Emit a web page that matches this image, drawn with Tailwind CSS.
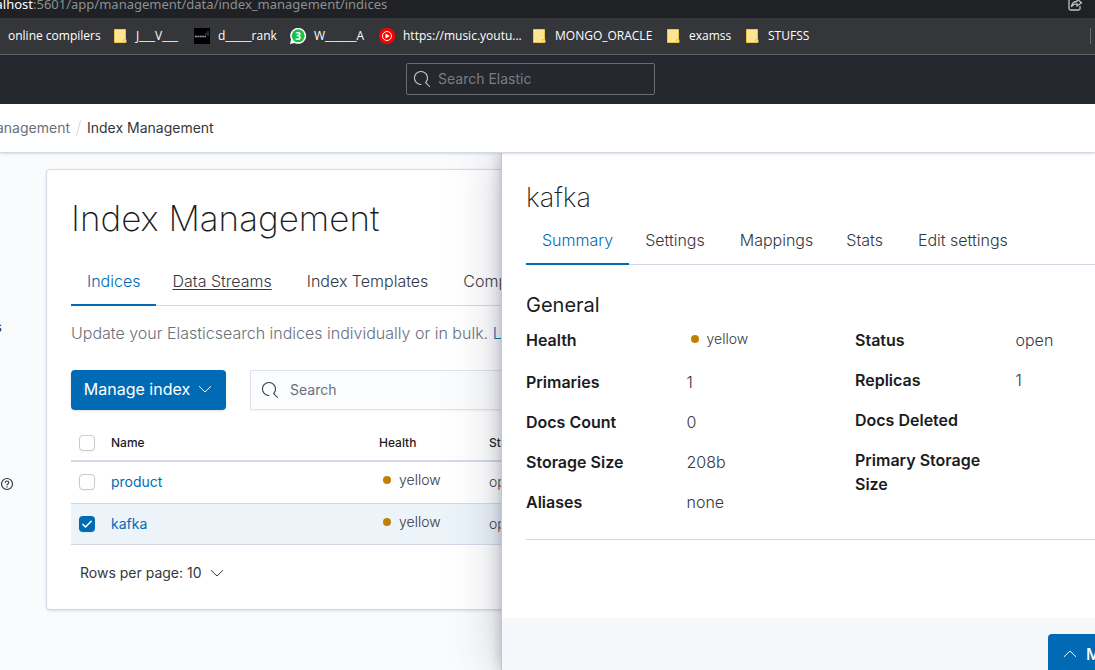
<!DOCTYPE html>
<html lang="en">
<head>
<meta charset="utf-8">
<title>Index Management</title>
<script src="https://cdn.jsdelivr.net/npm/@tailwindcss/browser@4"></script>
</head>
<body class="h-screen overflow-hidden flex flex-col bg-[#fafbfd] font-['Inter',sans-serif] text-[#343741]">

<!-- Browser address bar -->
<div class="h-[18px] shrink-0 bg-[#202124] flex items-end justify-between overflow-hidden font-['Noto_Sans',sans-serif] text-[13px] leading-5 text-[#8b9095] pr-3">
  <div class="flex">
    <span class="w-[33px] flex justify-end text-white whitespace-nowrap"><span>localhost</span></span><span class="pb-1">:5601/app/management/data/index_management/indices</span>
  </div>
  <button aria-label="Share" class="pb-1.5">
    <svg class="size-4" viewBox="0 0 16 16" fill="none" stroke="#bdc1c6" stroke-width="1.3"><path d="M5 3H3.500Q2 3 2 4.500V12.500Q2 14 3.500 14H11.500Q13 14 13 12.500V10"/><path d="M4.500 10.500C5 7 7 5.500 10 5.500V3L14.500 6.800L10 10V7.800C7.500 7.800 6 8.500 4.500 10.500Z" stroke-linejoin="round"/></svg>
  </button>
</div>

<!-- Bookmarks -->
<nav class="h-[37px] shrink-0 bg-[#35363a] border-b border-[#5f6063] flex items-center pl-2 pr-1 font-['Open_Sans',sans-serif] text-xs text-white whitespace-nowrap">
  <a href="#" class="w-[104px]">online compilers</a>
  <a href="#" class="w-[82px] flex items-center gap-2"><svg class="size-4 shrink-0" viewBox="0 0 16 16"><path d="M2.500 1.500H13.500V11V14.500H2.500Z" fill="#ffe591" stroke="#e9c64c"/><path d="M11.500 14.500V11.500H14V14.500Z" fill="#ffe591" stroke="#e9c64c"/></svg>J___V___</a>
  <a href="#" class="w-24 flex items-center gap-2"><svg class="size-4 shrink-0" viewBox="0 0 16 16"><path fill="#000" d="M0 0H16V16H0Z"/><path d="M1 8.500H12" stroke="#999" stroke-width="1.500" stroke-dasharray="2 .4"/><path d="M12 5V7M14 3V8" stroke="#12343d" stroke-width="2"/></svg>d_____rank</a>
  <a href="#" class="w-[89px] flex items-center gap-2"><svg class="size-4 shrink-0" viewBox="0 0 16 16"><path d="M0 16L1 11.500A8 8 0 1 1 4.500 15Z" fill="#fff"/><circle cx="8.200" cy="7.800" r="6.500" fill="#19c04b"/><text x="8.200" y="11.500" text-anchor="middle" font-size="10" font-weight="700" fill="#fff" font-family="Open Sans">3</text></svg>W______A</a>
  <a href="#" class="w-[152px] flex items-center gap-2"><svg class="size-4 shrink-0" viewBox="0 0 16 16"><circle cx="8" cy="8" r="8" fill="#f00"/><circle cx="8" cy="8" r="4.500" fill="none" stroke="#fff"/><path d="M6.500 5.500L10.800 8L6.500 10.500Z" fill="#fff"/></svg>https://music.youtu...</a>
  <a href="#" class="w-[134px] flex items-center gap-2"><svg class="size-4 shrink-0" viewBox="0 0 16 16"><path d="M2.500 1.500H13.500V11V14.500H2.500Z" fill="#ffe591" stroke="#e9c64c"/><path d="M11.500 14.500V11.500H14V14.500Z" fill="#ffe591" stroke="#e9c64c"/></svg>MONGO_ORACLE</a>
  <a href="#" class="w-[79px] flex items-center gap-2"><svg class="size-4 shrink-0" viewBox="0 0 16 16"><path d="M2.500 1.500H13.500V11V14.500H2.500Z" fill="#ffe591" stroke="#e9c64c"/><path d="M11.500 14.500V11.500H14V14.500Z" fill="#ffe591" stroke="#e9c64c"/></svg>examss</a>
  <a href="#" class="flex items-center gap-2"><svg class="size-4 shrink-0" viewBox="0 0 16 16"><path d="M2.500 1.500H13.500V11V14.500H2.500Z" fill="#ffe591" stroke="#e9c64c"/><path d="M11.500 14.500V11.500H14V14.500Z" fill="#ffe591" stroke="#e9c64c"/></svg>STUFSS</a>
  <span class="ml-auto h-4 border-l border-[#6b6c6f]"></span>
</nav>

<!-- Elastic header -->
<header class="h-[49px] shrink-0 bg-[#25282f] flex items-start pt-2">
  <label class="ml-[406px] w-[249px] h-8 border border-[#6b6c70] rounded-xs flex items-center gap-2 px-[7px]">
    <svg class="size-4 shrink-0" viewBox="0 0 16 16" fill="#cfd0d4"><path d="M11.271 11.978l3.872 3.873a.502.502 0 00.708 0 .502.502 0 000-.708l-3.565-3.564c2.380-2.747 2.267-6.923-.342-9.532-2.730-2.730-7.170-2.730-9.898 0-2.728 2.729-2.728 7.170 0 9.900a6.955 6.955 0 004.949 2.050.500.500 0 000-1 5.960 5.960 0 01-4.242-1.757 6.010 6.010 0 010-8.486 6.004 6.004 0 018.484 0 6.010 6.010 0 010 8.486.500.500 0 00.034.738z"/></svg>
    <input type="text" aria-label="Search Elastic" placeholder="Search Elastic" class="min-w-0 flex-1 bg-transparent text-sm text-white placeholder:text-[#7b7d82] outline-none">
  </label>
</header>

<!-- Breadcrumbs -->
<nav aria-label="Breadcrumb" class="h-[49px] shrink-0 bg-white border-b border-[#d3dae6] shadow-sm flex items-center text-sm relative z-10 whitespace-nowrap">
  <span class="w-[70px] flex justify-end"><a href="#" class="text-[#69707d]">Stack Management</a></span>
  <span class="w-px h-4 mx-2 bg-[#d3dae6] rotate-15"></span>
  <span aria-current="page">Index Management</span>
</nav>

<div class="flex-1 min-h-0 flex relative overflow-hidden">
  <!-- Side navigation -->
  <aside class="w-[46px] shrink-0 pt-[164px] text-sm leading-5 overflow-hidden">
    <div class="w-0.5 flex justify-end whitespace-nowrap"><a href="#">Ingest Node Pipelines</a></div>
    <button aria-label="Help" class="block mt-[140px]">
      <svg class="size-[14px]" viewBox="0 0 14 14" fill="none" stroke="#343741" stroke-width="1.200"><circle cx="7" cy="7" r="5.500"/><path d="M5.200 5.700Q5.200 4 7 4Q8.700 4 8.700 5.500Q8.700 6.300 7.800 6.900Q7 7.400 7 8.300M7 9.300V10.500"/></svg>
    </button>
  </aside>

  <!-- Index list -->
  <main class="flex-1 min-w-0 mt-4 self-start bg-white border border-[#d3dae6] rounded-sm shadow-sm p-6 overflow-hidden">
    <h1 class="mt-0.5 text-[35px] leading-[44px] font-extralight text-[#1a1c21]">Index Management</h1>
    <div role="tablist" class="mt-[18px] h-12 flex border-b border-[#d3dae6] font-light whitespace-nowrap">
      <button role="tab" aria-selected="true" class="-mb-px px-4 border-b-2 border-[#006bb4] text-[#006bb4]">Indices</button>
      <button role="tab" aria-selected="false" class="-mb-px pl-4 pr-[19px] border-b-2 border-transparent underline underline-offset-2">Data Streams</button>
      <button role="tab" aria-selected="false" class="-mb-px pl-4 pr-[19px] border-b-2 border-transparent">Index Templates</button>
      <button role="tab" aria-selected="false" class="-mb-px pl-4 pr-[19px] border-b-2 border-transparent">Component Templates</button>
    </div>
    <p class="mt-[15px] leading-6 font-light text-[#69707d] whitespace-nowrap">Update your Elasticsearch indices individually or in bulk. <a href="#" class="text-[#006bb4]">Learn more.</a></p>
    <div class="mt-[25px] flex gap-6">
      <button class="w-[155px] h-10 shrink-0 bg-[#006bb4] text-white rounded-sm shadow-sm pb-0.5 flex items-center justify-center gap-[7px] whitespace-nowrap">Manage index
        <svg class="size-4" viewBox="0 0 16 16" fill="none" stroke="currentColor" stroke-linecap="round" stroke-linejoin="round"><path d="M2.300 5.500L8 11L13.700 5.500"/></svg>
      </button>
      <label class="flex-1 h-10 bg-[#fbfcfd] border border-[#dfe3ee] shadow-xs flex items-center gap-3 px-[11px]">
        <svg class="size-4 shrink-0" viewBox="0 0 16 16" fill="#343741"><path d="M11.271 11.978l3.872 3.873a.502.502 0 00.708 0 .502.502 0 000-.708l-3.565-3.564c2.380-2.747 2.267-6.923-.342-9.532-2.730-2.730-7.170-2.730-9.898 0-2.728 2.729-2.728 7.170 0 9.900a6.955 6.955 0 004.949 2.050.500.500 0 000-1 5.960 5.960 0 01-4.242-1.757 6.010 6.010 0 010-8.486 6.004 6.004 0 018.484 0 6.010 6.010 0 010 8.486.500.500 0 00.034.738z"/></svg>
        <input type="search" aria-label="Search indices" placeholder="Search" class="flex-1 bg-transparent text-sm placeholder:text-[#69707d] outline-none">
      </label>
    </div>
    <table class="mt-[15px] w-full table-fixed text-left text-sm font-light">
      <thead>
        <tr class="h-9 border-b-2 border-[#d3dae6] text-xs text-[#1a1c21]">
          <th class="w-8 pl-2"><input type="checkbox" aria-label="Select all" class="block appearance-none size-4 bg-white border border-[#c9cbcd] rounded-sm shadow-xs"></th>
          <th class="w-[268px] px-2 font-medium">Name</th>
          <th class="w-[110px] px-2 font-medium">Health</th>
          <th class="px-2 font-medium">Status</th>
        </tr>
      </thead>
      <tbody>
        <tr class="h-[42px] border-b border-[#d3dae6]">
          <td class="pl-2"><input type="checkbox" aria-label="Select product" class="block appearance-none size-4 bg-white border border-[#c9cbcd] rounded-sm shadow-xs"></td>
          <td class="px-2"><a href="#" class="font-normal text-[#006bb4]">product</a></td>
          <td class="px-2 pb-1"><span class="flex items-center gap-2 pl-1"><span class="size-2 rounded-full bg-[#c08000]"></span>yellow</span></td>
          <td class="px-2">open</td>
        </tr>
        <tr class="h-[41px] border-b border-[#d3dae6] bg-[#ecf4fa]">
          <td class="pl-2"><span class="relative block size-4"><input type="checkbox" checked aria-label="Select kafka" class="block appearance-none size-4 bg-[#006bb4] rounded-sm shadow-xs"><svg class="absolute inset-0 size-4 pointer-events-none" viewBox="0 0 16 16" fill="none" stroke="#fff" stroke-width="1.500" stroke-linecap="round" stroke-linejoin="round"><path d="M3.800 8.300L6.500 11L12.200 5.300"/></svg></span></td>
          <td class="px-2"><a href="#" class="font-normal text-[#006bb4]">kafka</a></td>
          <td class="px-2 pb-1"><span class="flex items-center gap-2 pl-1"><span class="size-2 rounded-full bg-[#c08000]"></span>yellow</span></td>
          <td class="px-2">open</td>
        </tr>
      </tbody>
    </table>
    <button class="mt-4 h-6 pl-[9px] text-sm flex items-center gap-[7px] whitespace-nowrap">Rows per page: 10
      <svg class="size-4" viewBox="0 0 16 16" fill="none" stroke="currentColor" stroke-linecap="round" stroke-linejoin="round"><path d="M2.300 5.500L8 11L13.700 5.500"/></svg>
    </button>
  </main>

  <!-- Index details flyout -->
  <section aria-labelledby="flyout-title" class="absolute inset-y-0 left-[501px] right-0 bg-white border-l border-[#c4c7d2] shadow-[0_0_48px_rgba(60,64,90,0.28),0_0_12px_rgba(60,64,90,0.3)] flex flex-col overflow-hidden">
    <div class="pl-6 pt-[26px]">
      <h2 id="flyout-title" class="text-[27px] leading-[38px] font-extralight text-[#1a1c21]">kafka</h2>
      <div role="tablist" class="h-12 flex border-b border-[#d3dae6] font-light whitespace-nowrap">
        <button role="tab" aria-selected="true" class="-mb-px px-4 border-b-2 border-[#006bb4] text-[#006bb4]">Summary</button>
        <button role="tab" aria-selected="false" class="-mb-px pl-4 pr-[19px] border-b-2 border-transparent">Settings</button>
        <button role="tab" aria-selected="false" class="-mb-px pl-4 pr-[17px] border-b-2 border-transparent">Mappings</button>
        <button role="tab" aria-selected="false" class="-mb-px pl-4 pr-[19px] border-b-2 border-transparent">Stats</button>
        <button role="tab" aria-selected="false" class="-mb-px pl-4 pr-[19px] border-b-2 border-transparent">Edit settings</button>
      </div>
    </div>
    <div class="flex-1 min-h-0 pl-6 pt-6">
      <h3 class="text-xl leading-8 text-[#1a1c21]">General</h3>
      <div class="mt-[7px] pb-[25px] flex gap-6 items-start border-b border-[#d3dae6] leading-6">
        <dl class="w-[305px] shrink-0 grid grid-cols-2 gap-x-4 gap-y-4 font-light">
          <dt class="font-semibold text-[#1a1c21]">Health</dt>
          <dd class="h-[26px] pl-1 pb-1 flex items-center gap-2 text-sm"><span class="size-2 rounded-full bg-[#c08000]"></span>yellow</dd>
          <dt class="font-semibold text-[#1a1c21]">Primaries</dt><dd>1</dd>
          <dt class="font-semibold text-[#1a1c21]">Docs Count</dt><dd>0</dd>
          <dt class="font-semibold text-[#1a1c21]">Storage Size</dt><dd>208b</dd>
          <dt class="font-semibold text-[#1a1c21]">Aliases</dt><dd>none</dd>
        </dl>
        <dl class="w-[305px] shrink-0 grid grid-cols-2 gap-x-4 gap-y-4 font-light">
          <dt class="font-semibold text-[#1a1c21]">Status</dt><dd>open</dd>
          <dt class="font-semibold text-[#1a1c21]">Replicas</dt><dd>1</dd>
          <dt class="font-semibold text-[#1a1c21]">Docs Deleted</dt><dd></dd>
          <dt class="font-semibold text-[#1a1c21]">Primary Storage Size</dt><dd></dd>
        </dl>
      </div>
    </div>
    <footer class="h-[52px] shrink-0 bg-[#f5f7fa] pt-4 flex justify-end overflow-hidden">
      <button class="h-10 w-[120px] -mr-[73px] shrink-0 bg-[#006bb4] text-white font-medium rounded-sm flex items-center gap-2 pl-[14px]">
        <svg class="size-4" viewBox="0 0 16 16" fill="none" stroke="currentColor" stroke-linecap="round" stroke-linejoin="round"><path d="M2.300 10.500L8 5L13.700 10.500"/></svg>
        Manage</button>
    </footer>
  </section>
</div>
</body>
</html>
